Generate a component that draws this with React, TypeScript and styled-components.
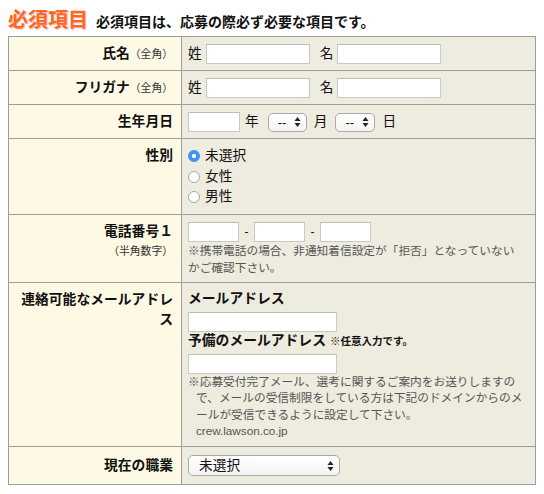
import React, { useState } from "react";
import styled, { createGlobalStyle, css } from "styled-components";

// TODOS
// - wire the fields into a submit handler

const GlobalStyle = createGlobalStyle`
  body {
    margin: 8px;
    background: #fff;
    color: #111;
    font-family: "Liberation Sans", "Noto Sans CJK JP", sans-serif;
  }
`;

const Header = styled.div`
  display: flex;
  align-items: baseline;
  gap: 8px;
  height: 24px;
  line-height: 24px;
  margin-bottom: 4px;
`;

const Title = styled.h2`
  margin: 0;
  font-size: 20px;
  font-weight: 700;
  color: #fb6a16;
  text-shadow: 1px 1px 0 #ffb3cf;
`;

const Lead = styled.span`
  font-size: 14px;
  font-weight: 700;
`;

const Grid = styled.div`
  display: grid;
  grid-template-columns: 172px 1fr;
  gap: 1px;
  width: 526px;
  background: #9d9d9d;
  border: 1px solid #9d9d9d;
`;

const cellPad = css<{ $roomy?: boolean }>`
  padding: ${(p) => (p.$roomy ? "9px 8px 8px" : "7px 8px 6px")};
`;

const Label = styled.div<{ $roomy?: boolean }>`
  ${cellPad};
  background: #fef9e4;
  text-align: right;
  font-size: 13.8px;
  font-weight: 700;
  line-height: 20px;
`;

const Small = styled.span<{ $block?: boolean }>`
  display: ${(p) => (p.$block ? "block" : "inline")};
  font-size: 10.8px;
  font-weight: 400;
  color: #333;
  line-height: ${(p) => (p.$block ? "18px" : "inherit")};
`;

const Value = styled.div<{ $roomy?: boolean }>`
  ${cellPad};
  padding-left: 6px;
  background: #eeebdf;
  font-size: 13.7px;
  line-height: 20px;
`;

const Line = styled.div`
  display: flex;
  align-items: center;
  height: 20px;
`;

const Word = styled.span<{ $before?: number; $after?: number }>`
  margin-left: ${(p) => p.$before ?? 0}px;
  margin-right: ${(p) => p.$after ?? 0}px;
`;

const Dash = styled.span`
  width: 15px;
  text-align: center;
  font-size: 12px;
`;

const TextInput = styled.input<{ $w: number }>`
  box-sizing: border-box;
  width: ${(p) => p.$w}px;
  height: 20px;
  margin: 0;
  padding: 0 3px;
  border: 1px solid #c8c8c8;
  border-top-color: #bdbdbd;
  border-radius: 0;
  background: #fff;
  font-size: 13px;
  outline: none;
`;

const SelectWrap = styled.span<{ $w: number; $h: number }>`
  position: relative;
  display: inline-block;
  width: ${(p) => p.$w}px;
  height: ${(p) => p.$h}px;
`;

const Select = styled.select<{ $size: number; $pad: number }>`
  box-sizing: border-box;
  appearance: none;
  width: 100%;
  height: 100%;
  margin: 0;
  padding: 0 0 0 ${(p) => p.$pad}px;
  border: 1px solid #a9a9a9;
  border-radius: 5px;
  background: linear-gradient(#ffffff, #f4f4f4);
  color: #111;
  font-family: "Liberation Sans", "Noto Sans CJK JP", sans-serif;
  font-size: ${(p) => p.$size}px;
  outline: none;
`;

const Arrows = styled.svg`
  position: absolute;
  right: 6px;
  top: 50%;
  transform: translateY(-50%);
  pointer-events: none;
`;

const RadioRow = styled.label`
  display: flex;
  align-items: center;
  gap: 5px;
  height: 20.5px;
`;

const Radio = styled.input`
  appearance: none;
  box-sizing: border-box;
  width: 12px;
  height: 12px;
  margin: 0;
  border: 1px solid #a6a6a6;
  border-radius: 50%;
  background: #fff;
  &:checked {
    border-color: #3a8ef5;
    background: radial-gradient(circle, #fff 0 1.8px, #3d93f7 2.4px);
  }
`;

const Note = styled.div<{ $hang?: boolean; $lh: number }>`
  color: #555;
  font-size: 11.7px;
  line-height: ${(p) => p.$lh}px;
  ${(p) =>
    p.$hang &&
    css`
      padding-left: 8px;
      text-indent: -8px;
    `}
`;

const SubHead = styled.div`
  display: flex;
  align-items: baseline;
  gap: 4px;
  height: 18px;
  font-weight: 700;
  font-size: 13.8px;
  line-height: 18px;
`;

const Optional = styled.span`
  font-size: 10.5px;
`;

const Field = styled.div<{ $gap?: number }>`
  display: flex;
  margin-top: ${(p) => p.$gap ?? 0}px;
`;

const SelectBox = ({
  w,
  h,
  size,
  pad,
  options,
}: {
  w: number;
  h: number;
  size: number;
  pad: number;
  options: string[];
}) => (
  <SelectWrap $w={w} $h={h}>
    <Select $size={size} $pad={pad} defaultValue={options[0]}>
      {options.map((o) => (
        <option key={o}>{o}</option>
      ))}
    </Select>
    <Arrows width="7" height="11" viewBox="0 0 7 11">
      <path d="M3.5 0.5 L6.5 4.5 L0.5 4.5 Z" fill="#222" />
      <path d="M3.5 10.5 L6.5 6.5 L0.5 6.5 Z" fill="#222" />
    </Arrows>
  </SelectWrap>
);

const App = () => {
  const [sex, setSex] = useState<string>("未選択");
  const days = ["--"];

  return (
    <>
      <GlobalStyle />
      <Header>
        <Title>必須項目</Title>
        <Lead>必須項目は、応募の際必ず必要な項目です。</Lead>
      </Header>
      <Grid>
        <Label>
          氏名<Small>（全角）</Small>
        </Label>
        <Value>
          <Line>
            <Word $after={4}>姓</Word>
            <TextInput $w={104} />
            <Word $before={10} $after={4}>
              名
            </Word>
            <TextInput $w={104} />
          </Line>
        </Value>

        <Label>
          フリガナ<Small>（全角）</Small>
        </Label>
        <Value>
          <Line>
            <Word $after={4}>姓</Word>
            <TextInput $w={104} />
            <Word $before={10} $after={4}>
              名
            </Word>
            <TextInput $w={104} />
          </Line>
        </Value>

        <Label>生年月日</Label>
        <Value>
          <Line>
            <TextInput $w={52} />
            <Word $before={5} $after={9}>
              年
            </Word>
            <SelectBox w={39} h={19} size={13} pad={9} options={days} />
            <Word $before={7} $after={8}>
              月
            </Word>
            <SelectBox w={40} h={19} size={13} pad={9} options={days} />
            <Word $before={7}>日</Word>
          </Line>
        </Value>

        <Label>性別</Label>
        <Value>
          {["未選択", "女性", "男性"].map((s) => (
            <RadioRow key={s}>
              <Radio
                type="radio"
                name="sex"
                checked={sex === s}
                onChange={() => setSex(s)}
              />
              {s}
            </RadioRow>
          ))}
        </Value>

        <Label>
          電話番号１
          <Small $block>（半角数字）</Small>
        </Label>
        <Value>
          <Line>
            <TextInput $w={51} />
            <Dash>-</Dash>
            <TextInput $w={51} />
            <Dash>-</Dash>
            <TextInput $w={51} />
          </Line>
          <Note $lh={17}>
            ※携帯電話の場合、非通知着信設定が「拒否」となっていない
            <br />
            かご確認下さい。
          </Note>
        </Value>

        <Label>連絡可能なメールアドレス</Label>
        <Value>
          <SubHead>メールアドレス</SubHead>
          <Field $gap={4}>
            <TextInput $w={149} />
          </Field>
          <SubHead>
            予備のメールアドレス<Optional>※任意入力です。</Optional>
          </SubHead>
          <Field $gap={4}>
            <TextInput $w={149} />
          </Field>
          <Note $hang $lh={16.6}>
            ※応募受付完了メール、選考に関するご案内をお送りしますの
            <br />
            で、メールの受信制限をしている方は下記のドメインからのメ
            <br />
            ールが受信できるように設定して下さい。
            <br />
            crew.lawson.co.jp
          </Note>
        </Value>

        <Label $roomy>現在の職業</Label>
        <Value $roomy>
          <Line>
            <SelectBox
              w={152}
              h={21}
              size={13.7}
              pad={10}
              options={["未選択", "学生", "会社員", "パート・アルバイト"]}
            />
          </Line>
        </Value>
      </Grid>
    </>
  );
};

export default App;
